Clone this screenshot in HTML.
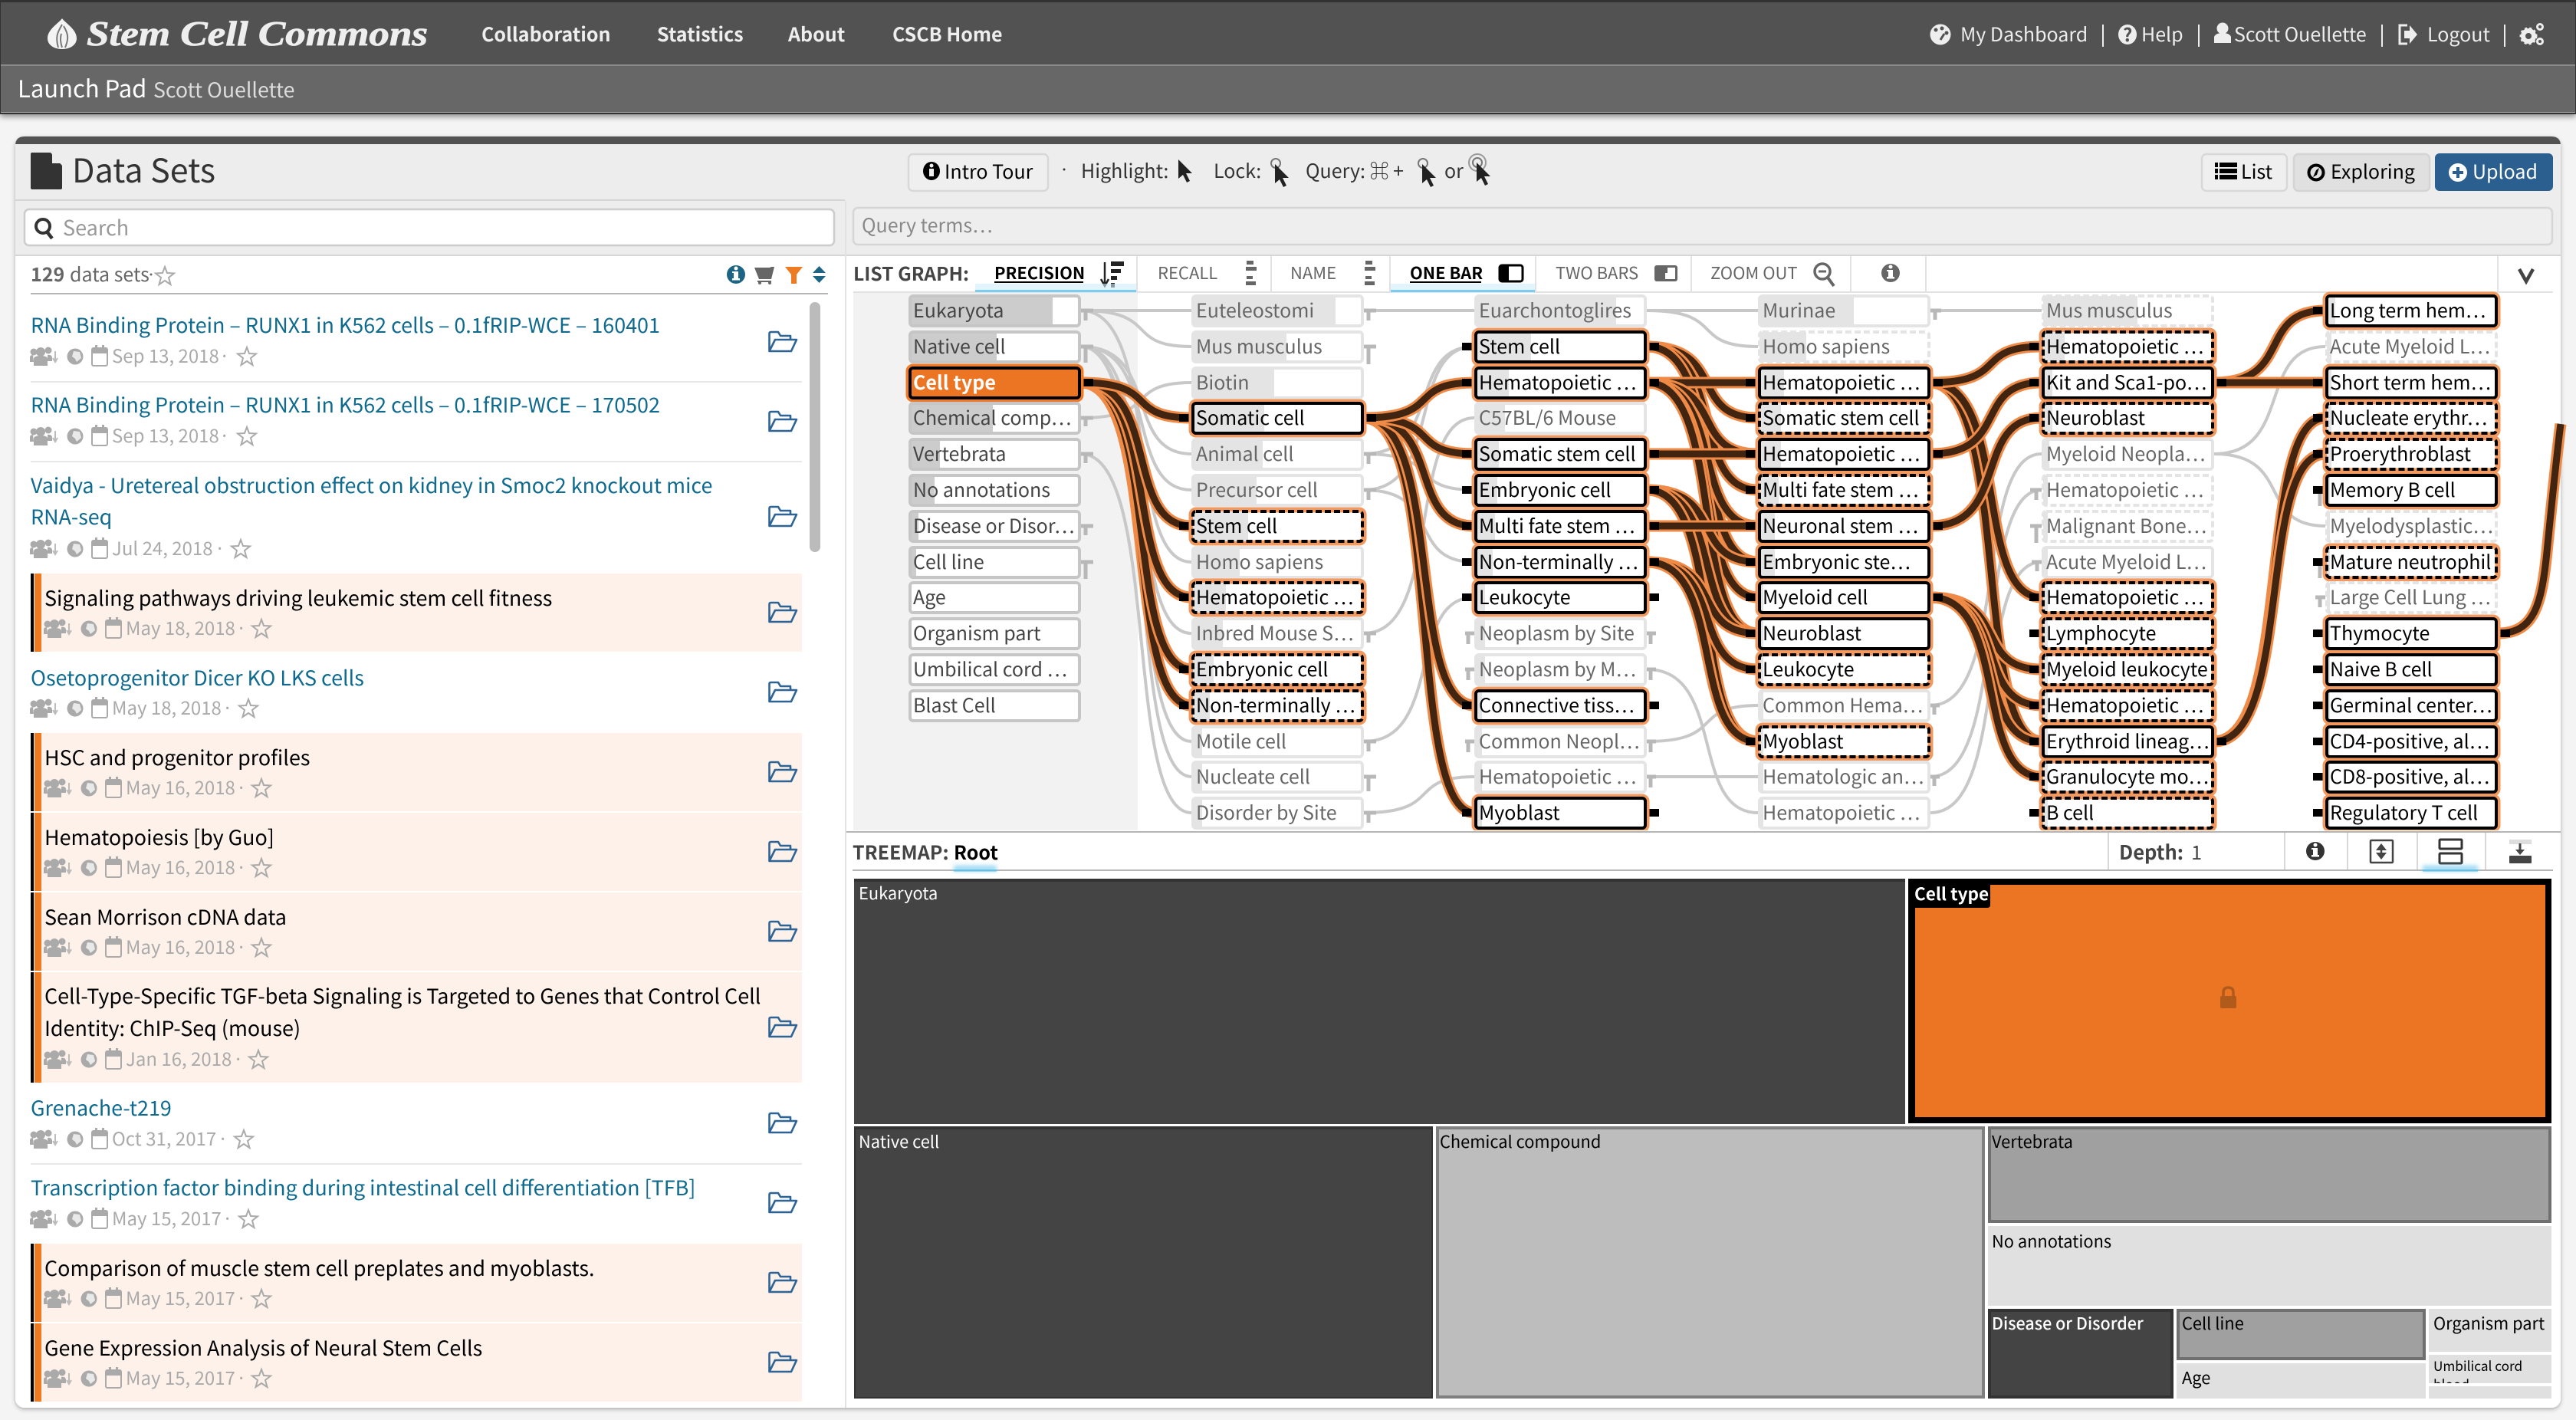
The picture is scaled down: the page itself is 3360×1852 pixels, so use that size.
<!DOCTYPE html>
<html><head><meta charset="utf-8"><title>Stem Cell Commons</title>
<style>
html,body{margin:0;padding:0;width:3360px;height:1852px;overflow:hidden;background:#f4f4f4}
svg{display:block;position:absolute;left:0;top:0}
text{font-family:"Noto Sans CJK JP","Liberation Sans",sans-serif;white-space:pre}
.t{font-size:26.9px;fill:#0e6a8e}.k{font-size:26.9px;fill:#000}.d{font-size:24px;fill:#aaa}
.n text{font-size:25px}
.S{--h:#f2995f;--e:#000;--d:none}.S text,.D text{fill:#000}
.D{--h:#f2995f;--e:#000;--d:8 4}
.G{--h:none;--e:#e4e4e4;--d:none}.H{--h:none;--e:#e4e4e4;--d:8 4}.G text,.H text{fill:#666}
.Z{--h:none;--e:#c6c6c6;--d:none}.Z text{fill:#444}
.n .b{fill:#e4e4e4}.Z .b{fill:#ccc}
.tab{font-size:22px;fill:#666}.tm{font-size:21.8px;fill:#000}.tw{font-size:21.8px;fill:#fff}
.top{font-size:25px;fill:#eee}.nav{font-size:25px;fill:#eee;font-weight:700}
.q{font-size:25px;fill:#333}
.o{fill:none;stroke:#ef8a47;stroke-width:15}.i{fill:none;stroke:rgba(45,25,10,.9);stroke-width:9}
</style></head><body>
<svg width="3360" height="1852" viewBox="0 0 3360 1852" xmlns="http://www.w3.org/2000/svg">
<defs>
<filter id="sh" x="-2%" y="-5%" width="104%" height="115%"><feDropShadow dx="0" dy="3" stdDeviation="4" flood-color="#000" flood-opacity=".45"/></filter>
<filter id="sp" x="-1%" y="-1%" width="102%" height="102%"><feDropShadow dx="0" dy="2" stdDeviation="3" flood-color="#000" flood-opacity=".3"/></filter>
<filter id="bl" x="-20%" y="-300%" width="140%" height="700%"><feGaussianBlur stdDeviation="3"/></filter>
<rect id="F" width="225" height="43" rx="6" style="fill:#fff;stroke:var(--h);stroke-width:7"/>
<rect id="E" x="2" y="2" width="221" height="39" rx="4" style="fill:none;stroke:var(--e);stroke-width:4;stroke-dasharray:var(--d)"/>
<path id="st" d="M0-12 3-4 12-3.5 5 2 7.5 11 0 6-7.5 11-5 2-12-3.5-3-4Z" fill="none" stroke="#aaa" stroke-width="2"/>
<g id="me" fill="#aaa">
<circle cx="13" cy="-6" r="6"/><circle cx="4" cy="-6" r="4.500"/><circle cx="23" cy="-8" r="4.500"/>
<path d="M4 12V3Q4-1 13-1 22-1 22 3V12Z"/><path d="M-1 7V1Q-1-2 3-2L4 7ZM22 6V-2Q27-3 28 1V6Z"/>
<path d="M32-7V5M29 2 32 7 35 2" stroke="#bbb" stroke-width="2" fill="none"/>
<circle cx="58" cy="0" r="10.5"/><path d="M56-7 64-6 66 2 60 7 58 3 54 0Z" fill="#e9e9e9"/>
<rect x="80" y="-11" width="20" height="23" rx="2" fill="none" stroke="#aaa" stroke-width="2"/><rect x="80" y="-11" width="20" height="7"/><rect x="84" y="-15" width="3" height="6"/><rect x="93" y="-15" width="3" height="6"/>
</g>
<path id="fo" d="M1.500 26V3Q1.500 1 3.500 1H13L16 6H29V11M1.500 26H30L37 11H9L1.500 26Z" fill="none" stroke="#2d6395" stroke-width="2.600" stroke-linejoin="round"/>
<path id="cu" d="M0 0V25L6 20 11 30 15 28 10 18 18 18Z"/>
<g id="inf"><ellipse cx="0" cy="0" rx="12" ry="12"/><rect x="-3" y="-4" width="6" height="10" fill="#fff"/><circle cx="0" cy="-8" r="2.500" fill="#fff"/><rect x="-5" y="5" width="10" height="2.500" fill="#fff"/><rect x="-5" y="-4" width="5" height="2" fill="#fff"/></g>
<g id="sortb" fill="#666"><rect x="1" y="-21" width="9" height="5"/><rect x="0" y="-13" width="14" height="5"/><rect x="1" y="-1" width="8" height="4"/><rect x="0" y="6" width="13" height="5"/></g>
</defs>

<!-- header -->
<rect width="3360" height="1852" fill="#f4f4f4"/>
<g filter="url(#sh)"><rect x="0" y="0" width="3360" height="149" fill="#333"/></g>
<rect x="1" y="3" width="3358" height="81" fill="#525252"/>
<rect x="1" y="84" width="3358" height="2" fill="#8a8a8a"/>
<rect x="1" y="86" width="3358" height="60" fill="#676767"/>
<rect x="1" y="146" width="3358" height="1" fill="#aaa"/>
<path d="M81 24C77 30 62 38 62 50 62 59 71 64 81 64 91 64 100 59 100 50 100 38 85 30 81 24Z" fill="#f3f3f3"/>
<path d="M81 32C75 42 72 48 76 62M83 34C89 44 90 50 85 62M80 44C78 50 79 56 81 62" stroke="#777" stroke-width="2" fill="none"/>
<text x="113" y="59" font-size="45" font-weight="700" font-style="italic" style="font-family:'Liberation Serif',serif" fill="#eee" textLength="445" lengthAdjust="spacingAndGlyphs" stroke="#eee" stroke-width=".8">Stem Cell Commons</text>
<text class="nav" x="628" y="54">Collaboration</text><text class="nav" x="857" y="54">Statistics</text><text class="nav" x="1028" y="54">About</text><text class="nav" x="1164" y="54">CSCB Home</text>
<text class="top" x="2557" y="54">My Dashboard</text><text class="top" x="2793" y="54">Help</text><text class="top" x="2914" y="54">Scott Ouellette</text><text class="top" x="3166" y="54">Logout</text>
<path d="M2743 32V61M2868 32V61M3107 32V61M3267 32V61" stroke="#eee" stroke-width="2"/>
<circle cx="2531" cy="45" r="13.500" fill="#eee"/><circle cx="2525" cy="39" r="2.500" fill="#525252"/><circle cx="2533" cy="37" r="2.500" fill="#525252"/><circle cx="2539" cy="43" r="2.500" fill="#525252"/><path d="M2531 52 2536 44" stroke="#525252" stroke-width="3"/>
<ellipse cx="2775" cy="45" rx="12" ry="13" fill="#eee"/><text x="2769" y="54" font-size="24" font-weight="700" fill="#525252">?</text>
<circle cx="2899" cy="37" r="7.500" fill="#eee"/><path d="M2888 56V48Q2890 43 2899 43 2908 43 2910 48V56Z" fill="#eee"/>
<path d="M3140 33H3130V57H3140" stroke="#eee" stroke-width="3" fill="none"/><path d="M3136 40H3143V33L3153 45 3143 57V50H3136Z" fill="#eee"/>
<circle cx="3298" cy="47" r="7" fill="none" stroke="#eee" stroke-width="6"/><circle cx="3298" cy="47" r="10" fill="none" stroke="#eee" stroke-width="3" stroke-dasharray="3 3"/><circle cx="3313" cy="35" r="3.500" fill="none" stroke="#eee" stroke-width="3"/><circle cx="3313" cy="54" r="3.500" fill="none" stroke="#eee" stroke-width="3"/>
<text x="23" y="127" font-size="31" fill="#fff">Launch Pad</text><text x="200" y="127" font-size="26.700" fill="#ddd">Scott Ouellette</text>

<!-- panel -->
<g filter="url(#sp)"><rect x="20" y="178" width="3320" height="1658" rx="12" fill="#fff"/></g>
<path d="M20 188V190Q20 178 32 178H3328Q3340 178 3340 190V188Z" fill="#525252"/>
<rect x="20" y="188" width="3320" height="144" fill="#ededed"/>
<rect x="20" y="260" width="1082" height="2" fill="#d6d6d6"/>
<rect x="20" y="332" width="3320" height="2" fill="#d6d6d6"/>
<rect x="1102" y="262" width="2" height="1574" fill="#e2e2e2"/>
<path d="M40 201Q40 199 42 199H66L81 216V245Q81 247 79 247H42Q40 247 40 245Z" fill="#333"/><path d="M68 199 81 213H68Z" fill="#ededed"/>
<text x="94" y="238" font-size="43" fill="#333">Data Sets</text>
<rect x="32" y="273" width="1056" height="47" rx="6" fill="#fff" stroke="#ccc" stroke-width="2.500"/>
<circle cx="56" cy="295" r="9" fill="none" stroke="#333" stroke-width="4"/><path d="M61 302 68 311" stroke="#333" stroke-width="4.500"/>
<text x="82" y="307" font-size="27" fill="#999">Search</text>
<text x="40" y="367" font-size="25" fill="#666" font-weight="700">129</text><text x="91" y="367" font-size="25" fill="#666">data sets</text><circle cx="197" cy="358" r="1.500" fill="#666"/>
<use href="#st" x="215" y="360" style="stroke:#666"/>
<use href="#inf" x="960" y="358" fill="#1d6485"/>
<path d="M984 349H1004L1006 348H1010L1006 364H990Z" fill="#666"/><path d="M988 367H1006" stroke="#666" stroke-width="2"/><circle cx="991" cy="369" r="2" fill="#666"/><circle cx="1004" cy="369" r="2" fill="#666"/>
<path d="M1024 348H1047L1039 358V370L1032 370V358Z" fill="#ee7a22"/>
<path d="M1060 356 1068.500 347 1077 356ZM1060 360H1077L1068.500 369Z" fill="#1d6485"/>
<rect x="40" y="382" width="1040" height="2" fill="#b5b5b5"/>
<rect x="1056" y="394" width="14" height="326" rx="7" fill="#bbb"/>

<!-- rows -->
<g fill="#fdf1e9"><rect x="40" y="748" width="1006" height="102"/><rect x="40" y="956" width="1006" height="102"/><rect x="40" y="1060" width="1006" height="102"/><rect x="40" y="1164" width="1006" height="102"/><rect x="40" y="1268" width="1006" height="144"/><rect x="40" y="1622" width="1006" height="102"/><rect x="40" y="1726" width="1006" height="102"/></g>
<g fill="#000"><rect x="40" y="748" width="4" height="102"/><rect x="40" y="956" width="4" height="102"/><rect x="40" y="1060" width="4" height="102"/><rect x="40" y="1164" width="4" height="102"/><rect x="40" y="1268" width="4" height="144"/><rect x="40" y="1622" width="4" height="102"/><rect x="40" y="1726" width="4" height="102"/></g>
<g fill="#ee7a22"><rect x="45" y="748" width="9" height="102"/><rect x="45" y="956" width="9" height="102"/><rect x="45" y="1060" width="9" height="102"/><rect x="45" y="1164" width="9" height="102"/><rect x="45" y="1268" width="9" height="144"/><rect x="45" y="1622" width="9" height="102"/><rect x="45" y="1726" width="9" height="102"/></g>
<g fill="#e8e8e8"><rect x="40" y="497" width="1006" height="2"/><rect x="40" y="601" width="1006" height="2"/><rect x="40" y="1517" width="1006" height="2"/></g>

<text class="t" x="40" y="434">RNA Binding Protein – RUNX1 in K562 cells – 0.1fRIP-WCE – 160401</text>
<use href="#me" x="40" y="465"/><text class="d" x="146" y="473">Sep 13, 2018</text><text class="d" x="286" y="473">·</text><use href="#st" x="322" y="465"/>
<use href="#fo" x="1002" y="432"/>
<text class="t" x="40" y="538">RNA Binding Protein – RUNX1 in K562 cells – 0.1fRIP-WCE – 170502</text>
<use href="#me" x="40" y="569"/><text class="d" x="146" y="577">Sep 13, 2018</text><text class="d" x="286" y="577">·</text><use href="#st" x="322" y="569"/>
<use href="#fo" x="1002" y="536"/>
<text class="t" x="40" y="643">Vaidya - Uretereal obstruction effect on kidney in Smoc2 knockout mice</text>
<text class="t" x="40" y="684">RNA-seq</text>
<use href="#me" x="40" y="716"/><text class="d" x="146" y="724">Jul 24, 2018</text><text class="d" x="280" y="724">·</text><use href="#st" x="314" y="716"/>
<use href="#fo" x="1002" y="660"/>
<text class="k" x="58" y="790">Signaling pathways driving leukemic stem cell fitness</text>
<use href="#me" x="58" y="820"/><text class="d" x="164" y="828">May 18, 2018</text><text class="d" x="308" y="828">·</text><use href="#st" x="341" y="820"/>
<use href="#fo" x="1002" y="785"/>
<text class="t" x="40" y="894">Osetoprogenitor Dicer KO LKS cells</text>
<use href="#me" x="40" y="924"/><text class="d" x="146" y="932">May 18, 2018</text><text class="d" x="290" y="932">·</text><use href="#st" x="324" y="924"/>
<use href="#fo" x="1002" y="889"/>
<text class="k" x="58" y="998">HSC and progenitor profiles</text>
<use href="#me" x="58" y="1028"/><text class="d" x="164" y="1036">May 16, 2018</text><text class="d" x="308" y="1036">·</text><use href="#st" x="341" y="1028"/>
<use href="#fo" x="1002" y="993"/>
<text class="k" x="58" y="1102">Hematopoiesis [by Guo]</text>
<use href="#me" x="58" y="1132"/><text class="d" x="164" y="1140">May 16, 2018</text><text class="d" x="308" y="1140">·</text><use href="#st" x="341" y="1132"/>
<use href="#fo" x="1002" y="1097"/>
<text class="k" x="58" y="1206">Sean Morrison cDNA data</text>
<use href="#me" x="58" y="1236"/><text class="d" x="164" y="1244">May 16, 2018</text><text class="d" x="308" y="1244">·</text><use href="#st" x="341" y="1236"/>
<use href="#fo" x="1002" y="1201"/>
<text class="k" x="58" y="1309">Cell-Type-Specific TGF-beta Signaling is Targeted to Genes that Control Cell</text>
<text class="k" x="58" y="1351">Identity: ChIP-Seq (mouse)</text>
<use href="#me" x="58" y="1382"/><text class="d" x="164" y="1390">Jan 16, 2018</text><text class="d" x="304" y="1390">·</text><use href="#st" x="337" y="1382"/>
<use href="#fo" x="1002" y="1326"/>
<text class="t" x="40" y="1455">Grenache-t219</text>
<use href="#me" x="40" y="1486"/><text class="d" x="146" y="1494">Oct 31, 2017</text><text class="d" x="284" y="1494">·</text><use href="#st" x="318" y="1486"/>
<use href="#fo" x="1002" y="1451"/>
<text class="t" x="40" y="1559">Transcription factor binding during intestinal cell differentiation [TFB]</text>
<use href="#me" x="40" y="1590"/><text class="d" x="146" y="1598">May 15, 2017</text><text class="d" x="290" y="1598">·</text><use href="#st" x="324" y="1590"/>
<use href="#fo" x="1002" y="1555"/>
<text class="k" x="58" y="1664">Comparison of muscle stem cell preplates and myoblasts.</text>
<use href="#me" x="58" y="1694"/><text class="d" x="164" y="1702">May 15, 2017</text><text class="d" x="308" y="1702">·</text><use href="#st" x="341" y="1694"/>
<use href="#fo" x="1002" y="1659"/>
<text class="k" x="58" y="1768">Gene Expression Analysis of Neural Stem Cells</text>
<use href="#me" x="58" y="1798"/><text class="d" x="164" y="1806">May 15, 2017</text><text class="d" x="308" y="1806">·</text><use href="#st" x="341" y="1798"/>
<use href="#fo" x="1002" y="1763"/>

<!-- top toolbar -->
<rect x="1185" y="201" width="182" height="48" rx="6" fill="#efefef" stroke="#d8d8d8" stroke-width="2.500"/>
<ellipse cx="1215" cy="223" rx="11" ry="12" fill="#000"/><rect x="1212" y="220" width="6" height="10" fill="#efefef"/><circle cx="1215" cy="216" r="2.500" fill="#efefef"/>
<text x="1232" y="233" font-size="25" fill="#000">Intro Tour</text>
<circle cx="1388" cy="221" r="1.500" fill="#333"/>
<text class="q" x="1410" y="232">Highlight:</text>
<use href="#cu" x="1537" y="208" fill="#222"/>
<text class="q" x="1583" y="232">Lock:</text>
<circle cx="1664" cy="213" r="6" fill="none" stroke="#777" stroke-width="2"/><use href="#cu" x="1663" y="214" fill="#222"/>
<text class="q" x="1703" y="232">Query: ⌘ +</text>
<circle cx="1856" cy="213" r="6" fill="none" stroke="#777" stroke-width="2"/><use href="#cu" x="1855" y="214" fill="#222"/>
<text class="q" x="1884" y="232">or</text>
<circle cx="1927" cy="212" r="6" fill="none" stroke="#777" stroke-width="2"/><circle cx="1927" cy="212" r="11" fill="none" stroke="#999" stroke-width="2"/><use href="#cu" x="1926" y="212" fill="#222"/>
<rect x="2872" y="201" width="111" height="48" rx="6" fill="#efefef" stroke="#d8d8d8" stroke-width="2.500"/>
<path d="M2889 215H2918M2889 223H2918M2889 231H2918" stroke="#000" stroke-width="6" stroke-dasharray="29 0"/><path d="M2894 212V234" stroke="#efefef" stroke-width="2"/>
<text x="2923" y="233" font-size="25" fill="#000">List</text>
<rect x="2992" y="201" width="177" height="48" rx="6" fill="#e0e0e0" stroke="#d4d4d4" stroke-width="2.500"/>
<circle cx="3021" cy="225" r="9.500" fill="none" stroke="#000" stroke-width="4"/><path d="M3017 231 3021 222 3025 219 3022 228Z" fill="#000"/>
<text x="3040" y="233" font-size="25" fill="#000">Exploring</text>
<rect x="3176" y="200" width="154" height="49" rx="6" fill="#2b5f8f"/>
<circle cx="3206" cy="225" r="12" fill="#fff"/><path d="M3206 218V232M3199 225H3213" stroke="#2b5f8f" stroke-width="4"/>
<text x="3225" y="233" font-size="25" fill="#fff">Upload</text>
<rect x="1113" y="271" width="2216" height="48" rx="6" fill="#eee" stroke="#d6d6d6" stroke-width="2.500"/>
<text x="1124" y="303" font-size="25" fill="#888">Query terms…</text>

<!-- list graph header -->
<text x="1113" y="366" font-size="24.600" font-weight="700" fill="#444">LIST GRAPH:</text>
<text x="1297" y="364" font-size="21.800" font-weight="700" fill="#000">PRECISION</text><rect x="1297" y="367" width="116" height="2" fill="#000"/>
<path d="M1441 342V370M1436 364 1441 373 1446 364" stroke="#222" stroke-width="2.500" fill="none"/><g fill="#222"><rect x="1449" y="341" width="17" height="6"/><rect x="1449" y="351" width="13" height="5"/><rect x="1449" y="360" width="8" height="5"/><rect x="1449" y="369" width="5" height="6"/></g>
<text class="tab" x="1510" y="364">RECALL</text><use href="#sortb" x="1625" y="361"/>
<text class="tab" x="1683" y="364">NAME</text><use href="#sortb" x="1780" y="361"/>
<text x="1839" y="364" font-size="21.800" font-weight="700" fill="#000">ONE BAR</text><rect x="1839" y="367" width="93" height="2" fill="#000"/>
<rect x="1956" y="346" width="30" height="21" rx="3" fill="#fff" stroke="#000" stroke-width="3"/><path d="M1956 349Q1956 346 1959 346H1968V367H1959Q1956 367 1956 364Z" fill="#000"/>
<text class="tab" x="2029" y="364">TWO BARS</text>
<rect x="2158" y="346" width="30" height="21" rx="3" fill="#666"/><rect x="2172" y="356" width="13" height="8" fill="#fff"/><rect x="2175" y="349" width="10" height="7" fill="#fff"/>
<text class="tab" x="2231" y="364">ZOOM OUT</text>
<circle cx="2377" cy="354" r="10" fill="none" stroke="#666" stroke-width="3.500"/><path d="M2372 354H2382" stroke="#666" stroke-width="3"/><path d="M2384 362 2392 373" stroke="#666" stroke-width="4"/>
<use href="#inf" x="2466" y="356" fill="#666"/>
<path d="M3286 351 3295 367 3304 351" fill="none" stroke="#444" stroke-width="4.500"/>
<g fill="#e2e2e2"><rect x="1482" y="334" width="2" height="46"/><rect x="1657" y="334" width="2" height="46"/><rect x="1812" y="334" width="2" height="46"/><rect x="2002" y="334" width="2" height="46"/><rect x="2205" y="334" width="2" height="46"/><rect x="2413" y="334" width="2" height="46"/><rect x="2511" y="334" width="2" height="46"/><rect x="3257" y="334" width="2" height="46"/><rect x="1113" y="380" width="2217" height="2"/></g>
<rect x="1272" y="370" width="210" height="9" fill="#cfeefb" opacity=".6"/><rect x="1814" y="370" width="188" height="9" fill="#cfeefb" opacity=".6"/>
<rect x="1272" y="378" width="210" height="3" fill="#7ccdf0"/><rect x="1814" y="378" width="188" height="3" fill="#7ccdf0"/>

<!-- graph bg -->
<rect x="1113" y="382" width="371" height="702" fill="#f2f2f2"/>

<!-- grey links -->
<g fill="none" stroke="#c8c8c8" stroke-width="4">
<path d="M1410 405H1554M1410 405C1514 405 1465 452 1554 452M1410 405C1514 405 1465 733 1554 733M1410 452C1514 452 1465 592 1554 592M1410 452C1514 452 1465 639 1554 639M1410 452C1514 452 1465 826 1554 826M1410 452C1514 452 1465 967 1554 967M1410 452C1514 452 1465 1013 1554 1013M1410 592C1514 592 1465 1060 1554 1060M1410 545C1514 545 1465 499 1554 499"/>
<path d="M1779 405H1923M1779 592C1883 592 1834 452 1923 452M1779 639C1883 639 1834 452 1923 452M1779 592C1883 592 1834 639 1923 639M1779 639C1883 639 1834 733 1923 733M1779 826C1883 826 1834 545 1923 545M1779 967C1883 967 1834 779 1923 779M1779 1060C1883 1060 1834 1013 1923 1013"/>
<path d="M2148 405H2293M2148 405C2252 405 2203 452 2293 452M2148 967C2252 967 2203 920 2293 920M2148 1013H2293M2148 873C2252 873 2203 1060 2293 1060"/>
<path d="M2518 405H2663M2518 920C2622 920 2573 592 2663 592M2518 1013C2622 1013 2573 639 2663 639M2518 1060C2622 1060 2573 733 2663 733"/>
<path d="M2888 592C2992 592 2943 452 3033 452M2888 592C2992 592 2943 686 3033 686"/>
</g>
<!-- T stubs -->
<g fill="none" stroke="#b8b8b8" stroke-width="5">
<path d="M1410 405H1426M1416 405V418M1410 452H1426M1416 452V473M1410 545H1426M1416 545V556M1410 592H1426M1416 592V604M1410 686H1426M1416 686V698M1410 733H1426M1416 733V755"/>
<path d="M1779 405H1795M1785 405V418M1779 452H1795M1785 452V475M1779 592H1795M1785 592V605M1779 639H1795M1785 639V652M1779 826H1795M1785 826V838M1779 967H1795M1785 967V980M1779 1060H1795M1785 1060V1073M1779 1013H1795M1785 1013V1032"/>
<path d="M1911 826H1923M1915 826V840M1911 873H1923M1915 873V887M1911 967H1923M1915 967V981M2148 826H2160M2153 826V840M2148 873H2160M2153 873V887M2148 967H2160M2153 967V981M2148 1013H2160M2153 1013V1027"/>
<path d="M2518 405H2532M2524 405V417M2518 920H2530M2523 920V932M2518 1013H2530M2523 1013V1025M2648 639H2663M2656 639V652M2648 686H2663M2656 686V708M2650 733H2663M2657 733V745M3020 779H3033M3026 779V792M3020 639H3033M3026 639V660M3020 733H3033M3026 733V754"/>
</g>
<!-- highlighted links -->
<path class="o" d="M1410 499C1514 499 1465 920 1554 920"/><path class="i" d="M1410 499C1514 499 1465 920 1554 920"/>
<path class="o" d="M1410 499C1514 499 1465 873 1554 873"/><path class="i" d="M1410 499C1514 499 1465 873 1554 873"/>
<path class="o" d="M1410 499C1514 499 1465 779 1554 779"/><path class="i" d="M1410 499C1514 499 1465 779 1554 779"/>
<path class="o" d="M1410 499C1514 499 1465 686 1554 686"/><path class="i" d="M1410 499C1514 499 1465 686 1554 686"/>
<path class="o" d="M1410 499C1514 499 1465 545 1554 545"/><path class="i" d="M1410 499C1514 499 1465 545 1554 545"/>
<path class="o" d="M1779 545C1883 545 1834 1060 1923 1060"/><path class="i" d="M1779 545C1883 545 1834 1060 1923 1060"/>
<path class="o" d="M1779 545C1883 545 1834 920 1923 920"/><path class="i" d="M1779 545C1883 545 1834 920 1923 920"/>
<path class="o" d="M1779 545C1883 545 1834 686 1923 686"/><path class="i" d="M1779 545C1883 545 1834 686 1923 686"/>
<path class="o" d="M1779 545C1883 545 1834 592 1923 592"/><path class="i" d="M1779 545C1883 545 1834 592 1923 592"/>
<path class="o" d="M1779 545C1883 545 1834 499 1923 499"/><path class="i" d="M1779 545C1883 545 1834 499 1923 499"/>
<path class="o" d="M2148 452C2252 452 2203 545 2293 545"/><path class="i" d="M2148 452C2252 452 2203 545 2293 545"/>
<path class="o" d="M2148 452C2252 452 2203 639 2293 639"/><path class="i" d="M2148 452C2252 452 2203 639 2293 639"/>
<path class="o" d="M2148 452C2252 452 2203 733 2293 733"/><path class="i" d="M2148 452C2252 452 2203 733 2293 733"/>
<path class="o" d="M2148 499H2293"/><path class="i" d="M2148 499H2293"/>
<path class="o" d="M2148 499C2252 499 2203 592 2293 592"/><path class="i" d="M2148 499C2252 499 2203 592 2293 592"/>
<path class="o" d="M2148 499C2252 499 2203 686 2293 686"/><path class="i" d="M2148 499C2252 499 2203 686 2293 686"/>
<path class="o" d="M2148 499C2252 499 2203 779 2293 779"/><path class="i" d="M2148 499C2252 499 2203 779 2293 779"/>
<path class="o" d="M2148 499C2252 499 2203 826 2293 826"/><path class="i" d="M2148 499C2252 499 2203 826 2293 826"/>
<path class="o" d="M2148 592H2293"/><path class="i" d="M2148 592H2293"/>
<path class="o" d="M2148 639C2252 639 2203 733 2293 733"/><path class="i" d="M2148 639C2252 639 2203 733 2293 733"/>
<path class="o" d="M2148 639C2252 639 2203 826 2293 826"/><path class="i" d="M2148 639C2252 639 2203 826 2293 826"/>
<path class="o" d="M2148 639C2252 639 2203 967 2293 967"/><path class="i" d="M2148 639C2252 639 2203 967 2293 967"/>
<path class="o" d="M2148 686H2293"/><path class="i" d="M2148 686H2293"/>
<path class="o" d="M2148 733C2252 733 2203 826 2293 826"/><path class="i" d="M2148 733C2252 733 2203 826 2293 826"/>
<path class="o" d="M2148 733C2252 733 2203 873 2293 873"/><path class="i" d="M2148 733C2252 733 2203 873 2293 873"/>
<path class="o" d="M2148 733C2252 733 2203 967 2293 967"/><path class="i" d="M2148 733C2252 733 2203 967 2293 967"/>
<path class="o" d="M2518 499C2622 499 2573 967 2663 967"/><path class="i" d="M2518 499C2622 499 2573 967 2663 967"/>
<path class="o" d="M2518 499C2622 499 2573 779 2663 779"/><path class="i" d="M2518 499C2622 499 2573 779 2663 779"/>
<path class="o" d="M2518 499C2622 499 2573 452 2663 452"/><path class="i" d="M2518 499C2622 499 2573 452 2663 452"/>
<path class="o" d="M2518 592C2622 592 2573 499 2663 499"/><path class="i" d="M2518 592C2622 592 2573 499 2663 499"/>
<path class="o" d="M2518 686C2622 686 2573 545 2663 545"/><path class="i" d="M2518 686C2622 686 2573 545 2663 545"/>
<path class="o" d="M2518 779C2622 779 2573 873 2663 873"/><path class="i" d="M2518 779C2622 779 2573 873 2663 873"/>
<path class="o" d="M2518 779C2622 779 2573 920 2663 920"/><path class="i" d="M2518 779C2622 779 2573 920 2663 920"/>
<path class="o" d="M2518 779C2622 779 2573 967 2663 967"/><path class="i" d="M2518 779C2622 779 2573 967 2663 967"/>
<path class="o" d="M2518 779C2622 779 2573 1013 2663 1013"/><path class="i" d="M2518 779C2622 779 2573 1013 2663 1013"/>
<path class="o" d="M2888 499C2992 499 2943 405 3033 405"/><path class="i" d="M2888 499C2992 499 2943 405 3033 405"/>
<path class="o" d="M2888 499H3033"/><path class="i" d="M2888 499H3033"/>
<path class="o" d="M2888 967C2992 967 2943 545 3033 545"/><path class="i" d="M2888 967C2992 967 2943 545 3033 545"/>
<path class="o" d="M2888 967C2992 967 2943 592 3033 592"/><path class="i" d="M2888 967C2992 967 2943 592 3033 592"/>
<path class="o" d="M3258 826C3305 826 3315 790 3322 720C3326 680 3334 600 3340 553"/><path class="i" d="M3258 826C3305 826 3315 790 3322 720C3326 680 3334 600 3340 553"/>
<!-- black stubs -->
<g stroke="#000" stroke-width="10" fill="none">
<path d="M1410 499H1426M1538 545H1554M1538 686H1554M1538 779H1554M1538 873H1554M1538 920H1554M1779 545H1795"/>
<path d="M1907 452H1923M1907 499H1923M1907 592H1923M1907 639H1923M1907 686H1923M1907 733H1923M1907 779H1923M1907 920H1923M1907 1060H1923"/>
<path d="M2148 452H2164M2148 499H2164M2148 592H2164M2148 639H2164M2148 686H2164M2148 733H2164M2148 779H2164M2148 920H2164M2148 1060H2164"/>
<path d="M2277 499H2293M2277 545H2293M2277 592H2293M2277 639H2293M2277 686H2293M2277 733H2293M2277 779H2293M2277 826H2293M2277 873H2293M2277 967H2293"/>
<path d="M2518 499H2534M2518 592H2534M2518 686H2534M2518 779H2534"/>
<path d="M2647 452H2663M2647 499H2663M2647 545H2663M2647 779H2663M2647 826H2663M2647 873H2663M2647 920H2663M2647 967H2663M2647 1013H2663M2647 1060H2663M2888 499H2904M2888 967H2904"/>
<path d="M3017 405H3033M3017 499H3033M3017 545H3033M3017 592H3033M3017 639H3033M3017 733H3033M3017 826H3033M3017 873H3033M3017 920H3033M3017 967H3033M3017 1013H3033M3017 1060H3033M3258 826H3274"/>
</g>

<!-- column 0 -->
<g class="n Z" transform="translate(1185 384)"><use href="#F"/><rect class="b" x="2" y="2" width="186" height="39"/><use href="#E"/><text x="6" y="30">Eukaryota</text></g>
<g class="n Z" transform="translate(1185 431)"><use href="#F"/><rect class="b" x="2" y="2" width="113" height="39"/><use href="#E"/><text x="6" y="30">Native cell</text></g>
<g transform="translate(1185 478)"><rect width="225" height="43" rx="6" fill="#ec7524" stroke="#ee7a2a" stroke-width="7"/><rect x="2" y="2" width="221" height="39" rx="4" fill="#ec7524" stroke="#000" stroke-width="4"/><text x="6" y="30" font-size="25" font-weight="700" fill="#fff">Cell type</text></g>
<g class="n Z" transform="translate(1185 524)"><use href="#F"/><rect class="b" x="2" y="2" width="108" height="39"/><use href="#E"/><text x="6" y="30">Chemical comp…</text></g>
<g class="n Z" transform="translate(1185 571)"><use href="#F"/><rect class="b" x="2" y="2" width="39" height="39"/><use href="#E"/><text x="6" y="30">Vertebrata</text></g>
<g class="n Z" transform="translate(1185 618)"><use href="#F"/><rect class="b" x="2" y="2" width="32" height="39"/><use href="#E"/><text x="6" y="30">No annotations</text></g>
<g class="n Z" transform="translate(1185 665)"><use href="#F"/><rect class="b" x="2" y="2" width="11" height="39"/><use href="#E"/><text x="6" y="30">Disease or Disor…</text></g>
<g class="n Z" transform="translate(1185 712)"><use href="#F"/><rect class="b" x="2" y="2" width="8" height="39"/><use href="#E"/><text x="6" y="30">Cell line</text></g>
<g class="n Z" transform="translate(1185 758)"><use href="#F"/><use href="#E"/><text x="6" y="30">Age</text></g>
<g class="n Z" transform="translate(1185 805)"><use href="#F"/><use href="#E"/><text x="6" y="30">Organism part</text></g>
<g class="n Z" transform="translate(1185 852)"><use href="#F"/><use href="#E"/><text x="6" y="30">Umbilical cord …</text></g>
<g class="n Z" transform="translate(1185 899)"><use href="#F"/><use href="#E"/><text x="6" y="30">Blast Cell</text></g>
<!-- column 1 -->
<g class="n G" transform="translate(1554 384)"><use href="#F"/><rect class="b" x="2" y="2" width="186" height="39"/><use href="#E"/><text x="6" y="30">Euteleostomi</text></g>
<g class="n G" transform="translate(1554 431)"><use href="#F"/><rect class="b" x="2" y="2" width="122" height="39"/><use href="#E"/><text x="6" y="30">Mus musculus</text></g>
<g class="n G" transform="translate(1554 478)"><use href="#F"/><rect class="b" x="2" y="2" width="106" height="39"/><use href="#E"/><text x="6" y="30">Biotin</text></g>
<g class="n S" transform="translate(1554 524)"><use href="#F"/><rect class="b" x="2" y="2" width="93" height="39"/><use href="#E"/><text x="6" y="30">Somatic cell</text></g>
<g class="n G" transform="translate(1554 571)"><use href="#F"/><rect class="b" x="2" y="2" width="91" height="39"/><use href="#E"/><text x="6" y="30">Animal cell</text></g>
<g class="n G" transform="translate(1554 618)"><use href="#F"/><rect class="b" x="2" y="2" width="83" height="39"/><use href="#E"/><text x="6" y="30">Precursor cell</text></g>
<g class="n D" transform="translate(1554 665)"><use href="#F"/><rect class="b" x="2" y="2" width="72" height="39"/><use href="#E"/><text x="6" y="30">Stem cell</text></g>
<g class="n G" transform="translate(1554 712)"><use href="#F"/><rect class="b" x="2" y="2" width="61" height="39"/><use href="#E"/><text x="6" y="30">Homo sapiens</text></g>
<g class="n D" transform="translate(1554 758)"><use href="#F"/><rect class="b" x="2" y="2" width="43" height="39"/><use href="#E"/><text x="6" y="30">Hematopoietic …</text></g>
<g class="n G" transform="translate(1554 805)"><use href="#F"/><rect class="b" x="2" y="2" width="39" height="39"/><use href="#E"/><text x="6" y="30">Inbred Mouse S…</text></g>
<g class="n D" transform="translate(1554 852)"><use href="#F"/><rect class="b" x="2" y="2" width="27" height="39"/><use href="#E"/><text x="6" y="30">Embryonic cell</text></g>
<g class="n D" transform="translate(1554 899)"><use href="#F"/><rect class="b" x="2" y="2" width="22" height="39"/><use href="#E"/><text x="6" y="30">Non-terminally …</text></g>
<g class="n G" transform="translate(1554 946)"><use href="#F"/><rect class="b" x="2" y="2" width="12" height="39"/><use href="#E"/><text x="6" y="30">Motile cell</text></g>
<g class="n G" transform="translate(1554 992)"><use href="#F"/><rect class="b" x="2" y="2" width="12" height="39"/><use href="#E"/><text x="6" y="30">Nucleate cell</text></g>
<g class="n G" transform="translate(1554 1039)"><use href="#F"/><rect class="b" x="2" y="2" width="12" height="39"/><use href="#E"/><text x="6" y="30">Disorder by Site</text></g>
<!-- column 2 -->
<g class="n G" transform="translate(1923 384)"><use href="#F"/><rect class="b" x="2" y="2" width="183" height="39"/><use href="#E"/><text x="6" y="30">Euarchontoglires</text></g>
<g class="n S" transform="translate(1923 431)"><use href="#F"/><rect class="b" x="2" y="2" width="72" height="39"/><use href="#E"/><text x="6" y="30">Stem cell</text></g>
<g class="n S" transform="translate(1923 478)"><use href="#F"/><rect class="b" x="2" y="2" width="43" height="39"/><use href="#E"/><text x="6" y="30">Hematopoietic …</text></g>
<g class="n G" transform="translate(1923 524)"><use href="#F"/><rect class="b" x="2" y="2" width="38" height="39"/><use href="#E"/><text x="6" y="30">C57BL/6 Mouse</text></g>
<g class="n S" transform="translate(1923 571)"><use href="#F"/><rect class="b" x="2" y="2" width="30" height="39"/><use href="#E"/><text x="6" y="30">Somatic stem cell</text></g>
<g class="n S" transform="translate(1923 618)"><use href="#F"/><rect class="b" x="2" y="2" width="28" height="39"/><use href="#E"/><text x="6" y="30">Embryonic cell</text></g>
<g class="n S" transform="translate(1923 665)"><use href="#F"/><rect class="b" x="2" y="2" width="25" height="39"/><use href="#E"/><text x="6" y="30">Multi fate stem …</text></g>
<g class="n S" transform="translate(1923 712)"><use href="#F"/><rect class="b" x="2" y="2" width="22" height="39"/><use href="#E"/><text x="6" y="30">Non-terminally …</text></g>
<g class="n S" transform="translate(1923 758)"><use href="#F"/><rect class="b" x="2" y="2" width="12" height="39"/><use href="#E"/><text x="6" y="30">Leukocyte</text></g>
<g class="n G" transform="translate(1923 805)"><use href="#F"/><rect class="b" x="2" y="2" width="12" height="39"/><use href="#E"/><text x="6" y="30">Neoplasm by Site</text></g>
<g class="n G" transform="translate(1923 852)"><use href="#F"/><rect class="b" x="2" y="2" width="12" height="39"/><use href="#E"/><text x="6" y="30">Neoplasm by M…</text></g>
<g class="n S" transform="translate(1923 899)"><use href="#F"/><rect class="b" x="2" y="2" width="8" height="39"/><use href="#E"/><text x="6" y="30">Connective tiss…</text></g>
<g class="n G" transform="translate(1923 946)"><use href="#F"/><rect class="b" x="2" y="2" width="8" height="39"/><use href="#E"/><text x="6" y="30">Common Neopl…</text></g>
<g class="n G" transform="translate(1923 992)"><use href="#F"/><rect class="b" x="2" y="2" width="8" height="39"/><use href="#E"/><text x="6" y="30">Hematopoietic …</text></g>
<g class="n S" transform="translate(1923 1039)"><use href="#F"/><rect class="b" x="2" y="2" width="8" height="39"/><use href="#E"/><text x="6" y="30">Myoblast</text></g>
<!-- column 3 -->
<g class="n G" transform="translate(2293 384)"><use href="#F"/><rect class="b" x="2" y="2" width="123" height="39"/><use href="#E"/><text x="6" y="30">Murinae</text></g>
<g class="n H" transform="translate(2293 431)"><use href="#F"/><rect class="b" x="2" y="2" width="61" height="39"/><use href="#E"/><text x="6" y="30">Homo sapiens</text></g>
<g class="n S" transform="translate(2293 478)"><use href="#F"/><rect class="b" x="2" y="2" width="32" height="39"/><use href="#E"/><text x="6" y="30">Hematopoietic …</text></g>
<g class="n D" transform="translate(2293 524)"><use href="#F"/><rect class="b" x="2" y="2" width="28" height="39"/><use href="#E"/><text x="6" y="30">Somatic stem cell</text></g>
<g class="n S" transform="translate(2293 571)"><use href="#F"/><rect class="b" x="2" y="2" width="28" height="39"/><use href="#E"/><text x="6" y="30">Hematopoietic …</text></g>
<g class="n D" transform="translate(2293 618)"><use href="#F"/><rect class="b" x="2" y="2" width="25" height="39"/><use href="#E"/><text x="6" y="30">Multi fate stem …</text></g>
<g class="n S" transform="translate(2293 665)"><use href="#F"/><rect class="b" x="2" y="2" width="20" height="39"/><use href="#E"/><text x="6" y="30">Neuronal stem …</text></g>
<g class="n S" transform="translate(2293 712)"><use href="#F"/><rect class="b" x="2" y="2" width="20" height="39"/><use href="#E"/><text x="6" y="30">Embryonic ste…</text></g>
<g class="n S" transform="translate(2293 758)"><use href="#F"/><rect class="b" x="2" y="2" width="5" height="39"/><use href="#E"/><text x="6" y="30">Myeloid cell</text></g>
<g class="n S" transform="translate(2293 805)"><use href="#F"/><rect class="b" x="2" y="2" width="5" height="39"/><use href="#E"/><text x="6" y="30">Neuroblast</text></g>
<g class="n D" transform="translate(2293 852)"><use href="#F"/><rect class="b" x="2" y="2" width="5" height="39"/><use href="#E"/><text x="6" y="30">Leukocyte</text></g>
<g class="n G" transform="translate(2293 899)"><use href="#F"/><rect class="b" x="2" y="2" width="5" height="39"/><use href="#E"/><text x="6" y="30">Common Hema…</text></g>
<g class="n D" transform="translate(2293 946)"><use href="#F"/><rect class="b" x="2" y="2" width="5" height="39"/><use href="#E"/><text x="6" y="30">Myoblast</text></g>
<g class="n G" transform="translate(2293 992)"><use href="#F"/><rect class="b" x="2" y="2" width="5" height="39"/><use href="#E"/><text x="6" y="30">Hematologic an…</text></g>
<g class="n G" transform="translate(2293 1039)"><use href="#F"/><rect class="b" x="2" y="2" width="5" height="39"/><use href="#E"/><text x="6" y="30">Hematopoietic …</text></g>
<!-- column 4 -->
<g class="n H" transform="translate(2663 384)"><use href="#F"/><rect class="b" x="2" y="2" width="123" height="39"/><use href="#E"/><text x="6" y="30">Mus musculus</text></g>
<g class="n D" transform="translate(2663 431)"><use href="#F"/><rect class="b" x="2" y="2" width="28" height="39"/><use href="#E"/><text x="6" y="30">Hematopoietic …</text></g>
<g class="n S" transform="translate(2663 478)"><use href="#F"/><rect class="b" x="2" y="2" width="12" height="39"/><use href="#E"/><text x="6" y="30">Kit and Sca1-po…</text></g>
<g class="n D" transform="translate(2663 524)"><use href="#F"/><rect class="b" x="2" y="2" width="12" height="39"/><use href="#E"/><text x="6" y="30">Neuroblast</text></g>
<g class="n G" transform="translate(2663 571)"><use href="#F"/><rect class="b" x="2" y="2" width="8" height="39"/><use href="#E"/><text x="6" y="30">Myeloid Neopla…</text></g>
<g class="n H" transform="translate(2663 618)"><use href="#F"/><rect class="b" x="2" y="2" width="6" height="39"/><use href="#E"/><text x="6" y="30">Hematopoietic …</text></g>
<g class="n H" transform="translate(2663 665)"><use href="#F"/><rect class="b" x="2" y="2" width="6" height="39"/><use href="#E"/><text x="6" y="30">Malignant Bone…</text></g>
<g class="n G" transform="translate(2663 712)"><use href="#F"/><rect class="b" x="2" y="2" width="6" height="39"/><use href="#E"/><text x="6" y="30">Acute Myeloid L…</text></g>
<g class="n D" transform="translate(2663 758)"><use href="#F"/><rect class="b" x="2" y="2" width="6" height="39"/><use href="#E"/><text x="6" y="30">Hematopoietic …</text></g>
<g class="n D" transform="translate(2663 805)"><use href="#F"/><rect class="b" x="2" y="2" width="6" height="39"/><use href="#E"/><text x="6" y="30">Lymphocyte</text></g>
<g class="n D" transform="translate(2663 852)"><use href="#F"/><rect class="b" x="2" y="2" width="6" height="39"/><use href="#E"/><text x="6" y="30">Myeloid leukocyte</text></g>
<g class="n D" transform="translate(2663 899)"><use href="#F"/><rect class="b" x="2" y="2" width="6" height="39"/><use href="#E"/><text x="6" y="30">Hematopoietic …</text></g>
<g class="n S" transform="translate(2663 946)"><use href="#F"/><rect class="b" x="2" y="2" width="6" height="39"/><use href="#E"/><text x="6" y="30">Erythroid lineag…</text></g>
<g class="n D" transform="translate(2663 992)"><use href="#F"/><rect class="b" x="2" y="2" width="6" height="39"/><use href="#E"/><text x="6" y="30">Granulocyte mo…</text></g>
<g class="n D" transform="translate(2663 1039)"><use href="#F"/><rect class="b" x="2" y="2" width="6" height="39"/><use href="#E"/><text x="6" y="30">B cell</text></g>
<!-- column 5 -->
<g class="n S" transform="translate(3033 384)"><use href="#F"/><rect class="b" x="2" y="2" width="11" height="39"/><use href="#E"/><text x="6" y="30">Long term hem…</text></g>
<g class="n H" transform="translate(3033 431)"><use href="#F"/><rect class="b" x="2" y="2" width="6" height="39"/><use href="#E"/><text x="6" y="30">Acute Myeloid L…</text></g>
<g class="n S" transform="translate(3033 478)"><use href="#F"/><rect class="b" x="2" y="2" width="6" height="39"/><use href="#E"/><text x="6" y="30">Short term hem…</text></g>
<g class="n D" transform="translate(3033 524)"><use href="#F"/><rect class="b" x="2" y="2" width="6" height="39"/><use href="#E"/><text x="6" y="30">Nucleate erythr…</text></g>
<g class="n D" transform="translate(3033 571)"><use href="#F"/><rect class="b" x="2" y="2" width="6" height="39"/><use href="#E"/><text x="6" y="30">Proerythroblast</text></g>
<g class="n S" transform="translate(3033 618)"><use href="#F"/><rect class="b" x="2" y="2" width="4" height="39"/><use href="#E"/><text x="6" y="30">Memory B cell</text></g>
<g class="n H" transform="translate(3033 665)"><use href="#F"/><rect class="b" x="2" y="2" width="4" height="39"/><use href="#E"/><text x="6" y="30">Myelodysplastic…</text></g>
<g class="n D" transform="translate(3033 712)"><use href="#F"/><rect class="b" x="2" y="2" width="4" height="39"/><use href="#E"/><text x="6" y="30">Mature neutrophil</text></g>
<g class="n H" transform="translate(3033 758)"><use href="#F"/><rect class="b" x="2" y="2" width="4" height="39"/><use href="#E"/><text x="6" y="30">Large Cell Lung …</text></g>
<g class="n S" transform="translate(3033 805)"><use href="#F"/><rect class="b" x="2" y="2" width="4" height="39"/><use href="#E"/><text x="6" y="30">Thymocyte</text></g>
<g class="n S" transform="translate(3033 852)"><use href="#F"/><rect class="b" x="2" y="2" width="4" height="39"/><use href="#E"/><text x="6" y="30">Naive B cell</text></g>
<g class="n S" transform="translate(3033 899)"><use href="#F"/><rect class="b" x="2" y="2" width="4" height="39"/><use href="#E"/><text x="6" y="30">Germinal center…</text></g>
<g class="n S" transform="translate(3033 946)"><use href="#F"/><rect class="b" x="2" y="2" width="4" height="39"/><use href="#E"/><text x="6" y="30">CD4-positive, al…</text></g>
<g class="n S" transform="translate(3033 992)"><use href="#F"/><rect class="b" x="2" y="2" width="4" height="39"/><use href="#E"/><text x="6" y="30">CD8-positive, al…</text></g>
<g class="n S" transform="translate(3033 1039)"><use href="#F"/><rect class="b" x="2" y="2" width="4" height="39"/><use href="#E"/><text x="6" y="30">Regulatory T cell</text></g>

<!-- treemap header -->
<rect x="1104" y="1083" width="2236" height="53" fill="#fff"/>
<rect x="1104" y="1084" width="2236" height="2" fill="#b5b5b5"/>
<rect x="1112" y="1134" width="2218" height="2" fill="#b5b5b5"/>
<text x="1112" y="1121" font-size="25" font-weight="700" fill="#444">TREEMAP:</text><text x="1244" y="1121" font-size="25" font-weight="700" fill="#000">Root</text>
<text x="2764" y="1121" font-size="25.500" font-weight="700" fill="#444">Depth:</text><text x="2858" y="1121" font-size="25.500" fill="#444">1</text>
<g fill="#d8d8d8"><rect x="2749" y="1086" width="2" height="48"/><rect x="2979" y="1086" width="2" height="48"/><rect x="3061" y="1086" width="2" height="48"/><rect x="3152" y="1086" width="2" height="48"/><rect x="3241" y="1086" width="2" height="48"/></g>
<use href="#inf" x="3020" y="1110" fill="#333"/>
<rect x="3092" y="1096" width="29" height="29" rx="1" fill="none" stroke="#444" stroke-width="2.500"/>
<path d="M3106 1100 3099 1109H3113ZM3106 1121 3099 1112H3113Z" fill="#444"/><path d="M3106 1105V1116" stroke="#444" stroke-width="2.500"/>
<rect x="3182" y="1095" width="29" height="12" rx="1" fill="none" stroke="#333" stroke-width="3"/><rect x="3182" y="1113" width="29" height="13" rx="1" fill="none" stroke="#333" stroke-width="3"/>
<rect x="3273" y="1095" width="29" height="6" fill="#ddd"/><rect x="3273" y="1116" width="29" height="10" rx="1" fill="#444"/><path d="M3287 1100V1110" stroke="#444" stroke-width="3"/><path d="M3281 1108H3293L3287 1115Z" fill="#444"/>
<rect x="1244" y="1129" width="56" height="7" fill="#7ccdf0" filter="url(#bl)" opacity=".8"/><rect x="3160" y="1129" width="72" height="7" fill="#7ccdf0" filter="url(#bl)" opacity=".8"/>
<rect x="1244" y="1134" width="56" height="2.500" fill="#68bde2"/><rect x="3160" y="1134" width="72" height="2.500" fill="#68bde2"/>

<!-- treemap -->
<rect x="1114" y="1146" width="1371" height="320" fill="#444"/><rect x="1114" y="1146" width="1371" height="4" fill="#333"/>
<text class="tw" x="1120" y="1173">Eukaryota</text>
<rect x="2489" y="1146" width="839" height="319" fill="#000"/><rect x="2498" y="1154" width="822" height="303" fill="#ec7524"/>
<path d="M2498 1154H2596V1180Q2596 1184 2592 1184H2498Z" fill="#000"/>
<text x="2497" y="1174" font-size="22.500" font-weight="700" fill="#fff">Cell type</text>
<rect x="2896" y="1299" width="21" height="16" rx="2" fill="#b05a1c"/><path d="M2900 1299V1294Q2900 1288 2906.500 1288 2913 1288 2913 1294V1299" fill="none" stroke="#b05a1c" stroke-width="3.500"/>
<rect x="1114" y="1469" width="755" height="355" fill="#333"/><rect x="1116" y="1473" width="751" height="349" fill="#444"/>
<text class="tw" x="1120" y="1497">Native cell</text>
<rect x="1873" y="1469" width="716" height="355" fill="#7f7f7f"/><rect x="1877" y="1473" width="708" height="347" fill="#bdbdbd"/>
<text class="tm" x="1878" y="1497">Chemical compound</text>
<rect x="2593" y="1469" width="735" height="126" fill="#707070"/><rect x="2597" y="1473" width="727" height="118" fill="#a0a0a0"/>
<text class="tm" x="2598" y="1497">Vertebrata</text>
<rect x="2593" y="1599" width="735" height="104" fill="#e0e0e0"/>
<text class="tm" x="2598" y="1627">No annotations</text>
<rect x="2593" y="1707" width="242" height="117" fill="#333"/><rect x="2597" y="1711" width="234" height="109" fill="#444"/>
<text x="2598" y="1734" font-size="21.500" font-weight="500" fill="#fff">Disease or Disorder</text>
<rect x="2839" y="1707" width="325" height="67" fill="#707070"/><rect x="2843" y="1711" width="317" height="59" fill="#a0a0a0"/>
<text class="tm" x="2846" y="1734">Cell line</text>
<rect x="2839" y="1778" width="325" height="46" fill="#e0e0e0"/>
<text class="tm" x="2846" y="1805">Age</text>
<rect x="3168" y="1707" width="160" height="56" fill="#e0e0e0"/>
<text class="tm" x="3174" y="1734">Organism part</text>
<rect x="3168" y="1767" width="160" height="37" fill="#e0e0e0"/>
<text x="3174" y="1788" font-size="17.200" fill="#000">Umbilical cord</text>
<text x="3174" y="1812" font-size="17.200" fill="#000">blood</text>
<rect x="3168" y="1804" width="160" height="4" fill="#fff"/><rect x="3168" y="1808" width="160" height="16" fill="#e0e0e0"/>
</svg>
</body></html>
